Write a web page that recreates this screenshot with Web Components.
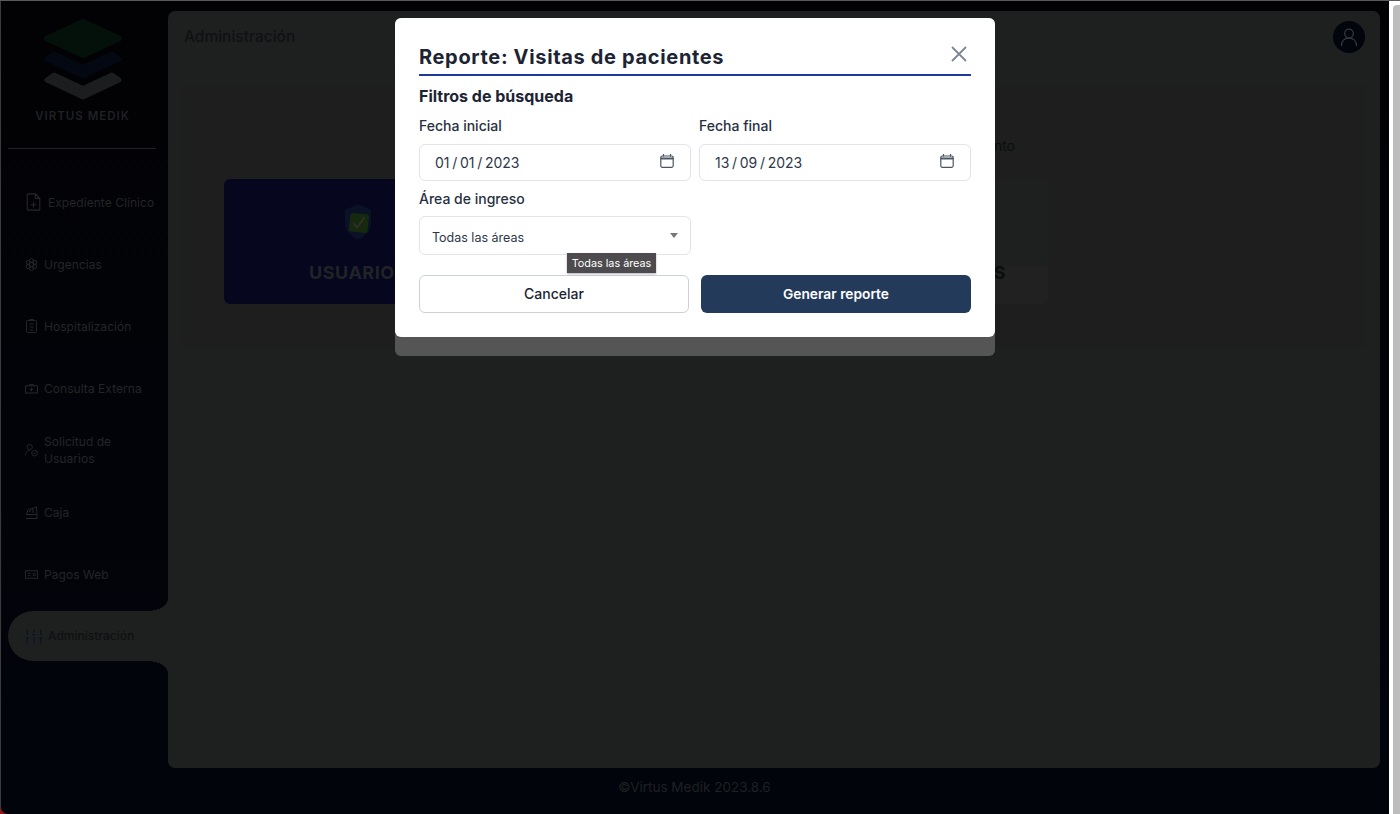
<!DOCTYPE html>
<html lang="es">
<head>
<meta charset="utf-8">
<title>Virtus Medik</title>
<style>
    html, body { margin: 0; height: 814px; overflow: hidden; background: #8a0f0f; }
    body { font-family: Inter, "Noto Sans", sans-serif; }
</style>
</head>
<body>
<vm-app>
    <vm-sidebar slot="side">
        <vm-nav-item wide>
            <svg slot="icon" width="15" height="18" viewBox="0 0 16 20" fill="none" stroke="#26282a" stroke-width="1.2"><path d="M2 1h8l5 5v12a1 1 0 0 1-1 1H2a1 1 0 0 1-1-1V2a1 1 0 0 1 1-1zM10 1v5h5M8 10v6M5 13h6"/></svg>
            Expediente Clínico
        </vm-nav-item>
        <vm-nav-item>
            <svg slot="icon" width="13" height="13" viewBox="0 0 13 13" fill="none" stroke="#26282a" stroke-width="1"><circle cx="6.500" cy="6.500" r="2"/><circle cx="6.500" cy="2.400" r="1.900"/><circle cx="6.500" cy="10.600" r="1.900"/><circle cx="3" cy="4.400" r="1.900"/><circle cx="10" cy="4.400" r="1.900"/><circle cx="3" cy="8.600" r="1.900"/><circle cx="10" cy="8.600" r="1.900"/></svg>
            Urgencias
        </vm-nav-item>
        <vm-nav-item>
            <svg slot="icon" width="11" height="14" viewBox="0 0 11 14" fill="none" stroke="#222426" stroke-width="1"><rect x=".5" y="1.500" width="10" height="12" rx="1"/><path d="M3.500 1.500V.5h4v1M3.500 5h4M3.500 8h4M3.500 11h4"/></svg>
            Hospitalización
        </vm-nav-item>
        <vm-nav-item>
            <svg slot="icon" width="14" height="12" viewBox="0 0 14 12" fill="none" stroke="#26282a" stroke-width="1.100"><path d="M1.500 3.500h11a1 1 0 0 1 1 1v6a1 1 0 0 1-1 1h-11a1 1 0 0 1-1-1v-6a1 1 0 0 1 1-1zM4.500 3.500C5 1.500 9 1.500 9.500 3.500M7 5.800v3.600M5.200 7.600h3.600"/></svg>
            Consulta Externa
        </vm-nav-item>
        <vm-nav-item>
            <svg slot="icon" width="15" height="15" viewBox="0 0 15 15" fill="none" stroke="#26282a" stroke-width="1"><circle cx="5.500" cy="3.500" r="3"/><path d="M.5 13c.5-3.500 2-5.500 5-6"/><circle cx="11" cy="10.500" r="3.300"/><path d="M9.500 10.500l1.200 1.200 1.900-2.200"/></svg>
            <span>Solicitud de<br>Usuarios</span>
        </vm-nav-item>
        <vm-nav-item>
            <svg slot="icon" width="13" height="13" viewBox="0 0 13 13" fill="none" stroke="#26282a" stroke-width="1"><path d="M1 12.500h11V8.500L11.500 1 3 4 1.500 8.500M1 8.500h11M4 6l2-1.500M8 7V3.500l-1 .6"/></svg>
            Caja
        </vm-nav-item>
        <vm-nav-item>
            <svg slot="icon" width="14" height="9" viewBox="0 0 14 9" fill="none" stroke="#26282a" stroke-width="1"><rect x=".5" y=".5" width="13" height="8"/><path d="M3 3.200h3M3 5.800h3"/><circle cx="10" cy="4.500" r="1.400"/></svg>
            Pagos Web
        </vm-nav-item>
        <vm-nav-item active>
            <svg slot="icon" width="19" height="17" viewBox="0 0 19 17" fill="none" stroke="#0c1226" stroke-width="1.200"><path d="M2.500 1v6M.5 10h4M2.500 10v6M9.500 1v3M7.500 6.500h4M9.500 9v7M16.500 1v6M14.500 10h4M16.500 10v6"/></svg>
            Administración
        </vm-nav-item>
    </vm-sidebar>

    <vm-main slot="main" heading="Administración">
        <vm-panel>
            <span slot="note">Reportes de visitas de pacientes y mantenimiento</span>
            <vm-tile kind="blue" label="USUARIOS">
                <svg width="30" height="40" viewBox="0 0 32 40"><path d="M16 1l14 6v14c0 9-7 15-14 18C9 36 2 30 2 21V7z" fill="#0b1126"/><rect x="7" y="11" width="20" height="20" rx="3" fill="#15290f" transform="rotate(6 17 21)"/><path d="M11 21l4 5 8-11" stroke="#3a3034" stroke-width="1.500" fill="none"/></svg>
            </vm-tile>
            <vm-tile></vm-tile>
            <vm-tile label="CONFIGURACIONES"></vm-tile>
        </vm-panel>
    </vm-main>

    <vm-dialog slot="over" heading="Reporte: Visitas de pacientes">
        <vm-field label="Fecha inicial"><vm-date value="01 / 01 / 2023"></vm-date></vm-field>
        <vm-field label="Fecha final"><vm-date value="13 / 09 / 2023"></vm-date></vm-field>
        <vm-field label="Área de ingreso"><vm-select value="Todas las áreas"></vm-select></vm-field>
    </vm-dialog>
</vm-app>

<script>
const appTemplate = document.createElement("template")
appTemplate.innerHTML = `
<style>
    :host { display: flex; height: 813px; border-top: 1px solid #5a5a5a; position: relative; background: #a01010; }
    .shell {
        width: 1388px; margin-left: 1px; flex: none; display: flex;
        background: linear-gradient(#020204, #02040c);
        border-bottom-left-radius: 7px;
        box-shadow: -1px 0 0 #3c3c3c;
    }
    .strip { flex: 1; padding: 4px 0 0 4px; background: #fff; display: flex; }
    .thumb { flex: 1; background: #bdbdbd; border-radius: 4px 0 0 0; }
    .over {
        position: absolute; left: 0; top: 0; width: 1390px; height: 813px;
        display: flex; justify-content: center; align-items: flex-start;
        padding-top: 17px; box-sizing: border-box;
    }
</style>
<div class="shell">
    <slot name="side"></slot>
    <slot name="main"></slot>
</div>
<div class="strip"><div class="thumb"></div></div>
<div class="over"><slot name="over"></slot></div>
`
class VmApp extends HTMLElement {
    constructor() {
        super()
        this.attachShadow({mode: "open"})
        this.shadowRoot.appendChild(appTemplate.content.cloneNode(true))
    }
}

const sidebarTemplate = document.createElement("template")
sidebarTemplate.innerHTML = `
<style>
    :host { display: block; width: 167px; flex: none; font-family: Inter, sans-serif; }
    .logo { height: 147px; display: flex; flex-direction: column; align-items: center; padding-top: 18px; box-sizing: border-box; width: 163px; }
    .logo svg { display: block; }
    .brand { margin-top: 8px; font-size: 11.5px; line-height: 14px; font-weight: 600; letter-spacing: 1px; color: #1f2123; }
    hr { border: 0; height: 1px; background: #202122; margin: 0 12px 0 7px; }
    nav { padding-top: 22px; }
</style>
<div class="logo">
    <svg width="82" height="82" viewBox="0 0 82 82">
        <path d="M41 3L77 19.500 41 36 5 19.500z" fill="#04100a" stroke="#04100a" stroke-width="6" stroke-linejoin="round"/>
        <path d="M12 35L41 48.500 70 35 77 40 41 57 5 40z" fill="#040812" stroke="#040812" stroke-width="5" stroke-linejoin="round"/>
        <path d="M12 56L41 69.500 70 56 77 61 41 78 5 61z" fill="#1b1d1e" stroke="#1b1d1e" stroke-width="5" stroke-linejoin="round"/>
    </svg>
    <div class="brand">VIRTUS MEDIK</div>
</div>
<hr>
<nav><slot></slot></nav>
`
class VmSidebar extends HTMLElement {
    constructor() {
        super()
        this.attachShadow({mode: "open"})
        this.shadowRoot.appendChild(sidebarTemplate.content.cloneNode(true))
    }
}

const navTemplate = document.createElement("template")
navTemplate.innerHTML = `
<style>
    :host { display: block; height: 62px; font-size: 12px; line-height: 17px; color: #232527; font-weight: 400; letter-spacing: .05px; }
    .row { height: 62px; display: flex; align-items: center; gap: 6px; padding-left: 24px; box-sizing: border-box; position: relative; }
    .ico { width: 13px; display: flex; justify-content: center; flex: none; }
    :host([wide]) .ico { width: 17px; }
    :host([active]) { color: #0e1012; font-weight: 500; letter-spacing: 0; }
    :host([active]) .row {
        height: 50px; margin: 6px 0 6px 7px; padding: 0 0 2px 17px; background: #1e201f;
        border-radius: 25px 0 0 25px; gap: 5px;
    }
    :host([active]) .ico { width: 18px; padding-top: 2px; }
    :host([active]) .row::before, :host([active]) .row::after {
        content: ""; position: absolute; right: 0; width: 20px; height: 12px;
    }
    :host([active]) .row::before { top: -12px; background: radial-gradient(ellipse 20px 12px at 0 0, transparent 98%, #1e201f 100%); }
    :host([active]) .row::after { bottom: -12px; background: radial-gradient(ellipse 20px 12px at 0 100%, transparent 98%, #1e201f 100%); }
</style>
<div class="row"><span class="ico"><slot name="icon"></slot></span><span><slot></slot></span></div>
`
class VmNavItem extends HTMLElement {
    constructor() {
        super()
        this.attachShadow({mode: "open"})
        this.shadowRoot.appendChild(navTemplate.content.cloneNode(true))
    }
}

const mainTemplate = document.createElement("template")
mainTemplate.innerHTML = `
<style>
    :host { display: flex; flex-direction: column; width: 1221px; flex: none; }
    .box { margin-top: 10px; width: 1212px; height: 757px; background: #1e201f; border-radius: 7px; box-sizing: border-box; }
    header { height: 51px; display: flex; justify-content: space-between; align-items: center; padding: 0 15px 0 16px; border-bottom: 1px solid #1f2120; }
    h1 { margin: 0; font-size: 15.5px; font-weight: 500; color: #0f1113; }
    .avatar { width: 32px; height: 32px; border-radius: 50%; background: #02050c; display: flex; align-items: center; justify-content: center; }
    .body { padding: 21px 14px 0; }
    footer { flex: 1; display: flex; align-items: center; justify-content: center; padding: 0 168px 9px 0; font-size: 13.5px; color: #1f2021; }
</style>
<div class="box">
    <header>
        <h1></h1>
        <div class="avatar">
            <svg width="20" height="20" viewBox="0 0 20 20" fill="none" stroke="#34373a" stroke-width="1.300"><circle cx="10" cy="6.500" r="4.300"/><path d="M2.500 19c0-5 3-8 7.500-8s7.500 3 7.500 8"/></svg>
        </div>
    </header>
    <div class="body"><slot></slot></div>
</div>
<footer>©Virtus Medik 2023.8.6</footer>
`
class VmMain extends HTMLElement {
    constructor() {
        super()
        this.attachShadow({mode: "open"})
        this.shadowRoot.appendChild(mainTemplate.content.cloneNode(true))
        this.shadowRoot.querySelector("h1").innerText = this.getAttribute("heading")
    }
}

const panelTemplate = document.createElement("template")
panelTemplate.innerHTML = `
<style>
    :host { display: block; height: 265px; background: #1d1e1d; border-radius: 6px; box-sizing: border-box; padding: 53px 42px 0; font-size: 14px; color: #0c0d0d; }
    .note { height: 42px; display: flex; justify-content: flex-end; padding-right: 309px; line-height: 17px; }
    .tiles { display: flex; gap: 10px; width: 824px; }
</style>
<div class="note"><slot name="note"></slot></div>
<div class="tiles"><slot></slot></div>
`
class VmPanel extends HTMLElement {
    constructor() {
        super()
        this.attachShadow({mode: "open"})
        this.shadowRoot.appendChild(panelTemplate.content.cloneNode(true))
    }
}

const tileTemplate = document.createElement("template")
tileTemplate.innerHTML = `
<style>
    :host { display: flex; flex-direction: column; align-items: center; height: 125px; width: 268px; flex: none; border-radius: 6px; background: linear-gradient(#1e201f 70%, #202120 70%); box-sizing: border-box; padding-top: 23px; font-size: 18px; font-weight: 700; color: #0c0d0d; }
    :host([kind=blue]) { background: #06061e; color: #222326; }
    .pic { height: 40px; }
    .label { margin-top: 20px; line-height: 22px; white-space: nowrap; letter-spacing: .5px; }
</style>
<div class="pic"><slot></slot></div>
<div class="label"></div>
`
class VmTile extends HTMLElement {
    constructor() {
        super()
        this.attachShadow({mode: "open"})
        this.shadowRoot.appendChild(tileTemplate.content.cloneNode(true))
        this.shadowRoot.querySelector(".label").innerText = this.getAttribute("label") || ""
    }
}

const dialogTemplate = document.createElement("template")
dialogTemplate.innerHTML = `
<style>
    :host { display: block; width: 600px; font-family: Inter, sans-serif; color: #1c2433; }
    .back { background: #555; border-radius: 6px; padding-bottom: 19px; }
    .card { background: #fff; border-radius: 6px; padding: 24px; height: 319px; box-sizing: border-box; position: relative; }
    .head { display: flex; justify-content: space-between; height: 32px; border-bottom: 2px solid #1e3a9e; }
    h2 { margin: 0; font-size: 20px; line-height: 30px; font-weight: 700; letter-spacing: .66px; }
    .close { margin: 4px 4px 0 0; width: 16px; height: 16px; }
    h3 { margin: 0; padding: 10px 0; font-size: 16px; line-height: 20px; font-weight: 700; }
    .grid { display: grid; grid-template-columns: 272px 272px; column-gap: 8px; }
    .actions { display: flex; gap: 12px; margin-top: 20px; }
    button { width: 270px; height: 38px; border-radius: 6px; font: 500 14px Inter, sans-serif; box-sizing: border-box; }
    .cancel { background: #fff; color: #1c2433; border: 1px solid #cbd0da; padding: 0 0 2px; }
    .go { background: #243a5a; color: #fff; border: 0; font-weight: 600; font-size: 13.75px; }
</style>
<div class="back">
    <div class="card">
        <div class="head">
            <h2></h2>
            <svg class="close" viewBox="0 0 16 16" fill="none" stroke="#7b8794" stroke-width="1.800"><path d="M1 1l14 14M15 1L1 15"/></svg>
        </div>
        <h3>Filtros de búsqueda</h3>
        <div class="grid"><slot></slot></div>
        <div class="actions">
            <button class="cancel">Cancelar</button>
            <button class="go">Generar reporte</button>
        </div>
    </div>
</div>
`
class VmDialog extends HTMLElement {
    constructor() {
        super()
        this.attachShadow({mode: "open"})
        this.shadowRoot.appendChild(dialogTemplate.content.cloneNode(true))
        this.shadowRoot.querySelector("h2").innerText = this.getAttribute("heading")
    }
}

const fieldTemplate = document.createElement("template")
fieldTemplate.innerHTML = `
<style>
    :host { display: block; }
    label { display: block; font-size: 14px; font-weight: 500; line-height: 20px; margin-bottom: 8px; color: #27303f; }
</style>
<label></label>
<slot></slot>
`
class VmField extends HTMLElement {
    constructor() {
        super()
        this.attachShadow({mode: "open"})
        this.shadowRoot.appendChild(fieldTemplate.content.cloneNode(true))
        this.shadowRoot.querySelector("label").innerText = this.getAttribute("label")
    }
}

const dateTemplate = document.createElement("template")
dateTemplate.innerHTML = `
<style>
    :host { display: flex; height: 37px; margin-bottom: 8px; align-items: center; justify-content: space-between; border: 1px solid #e2e4ea; border-radius: 6px; box-sizing: border-box; padding: 0 16px 0 15px; font-size: 14px; color: #2d3748; }
    span { white-space: pre; word-spacing: -1.250px; }
    svg { margin-top: -3px; }
</style>
<span></span>
<svg width="14" height="14" viewBox="0 0 14 14" fill="none" stroke="#4b5563" stroke-width="1.200"><rect x=".8" y="2" width="12.400" height="11.300" rx="1.500"/><path d="M.8 4.500h12.400" stroke-width="2"/><path d="M3.500 0v2.500M10.500 0v2.500"/></svg>
`
class VmDate extends HTMLElement {
    constructor() {
        super()
        this.attachShadow({mode: "open"})
        this.shadowRoot.appendChild(dateTemplate.content.cloneNode(true))
        this.shadowRoot.querySelector("span").innerText = this.getAttribute("value")
    }
}

const selectTemplate = document.createElement("template")
selectTemplate.innerHTML = `
<style>
    :host { display: flex; height: 39px; margin-top: -1px; align-items: center; justify-content: space-between; border: 1px solid #e2e4ea; border-radius: 6px; box-sizing: border-box; padding: 3px 12px 0; font-size: 12.5px; color: #2d3748; position: relative; }
    .arrow { width: 0; height: 0; border: 4px solid transparent; border-top: 5px solid #777; border-bottom: 0; margin-top: -3px; }
    .tip { position: absolute; left: 147px; top: 36px; height: 20px; width: 89px; display: flex; align-items: center; justify-content: center; background: #4d4b4d; color: #fff; font-size: 10.800px; box-shadow: 0 1px 2px rgba(0,0,0,.3); }
</style>
<span></span>
<i class="arrow"></i>
<div class="tip"></div>
`
class VmSelect extends HTMLElement {
    constructor() {
        super()
        this.attachShadow({mode: "open"})
        this.shadowRoot.appendChild(selectTemplate.content.cloneNode(true))
        this.shadowRoot.querySelector("span").innerText = this.getAttribute("value")
        this.shadowRoot.querySelector(".tip").innerText = this.getAttribute("value")
    }
}

customElements.define("vm-app", VmApp)
customElements.define("vm-sidebar", VmSidebar)
customElements.define("vm-nav-item", VmNavItem)
customElements.define("vm-main", VmMain)
customElements.define("vm-panel", VmPanel)
customElements.define("vm-tile", VmTile)
customElements.define("vm-dialog", VmDialog)
customElements.define("vm-field", VmField)
customElements.define("vm-date", VmDate)
customElements.define("vm-select", VmSelect)
</script>
</body>
</html>
